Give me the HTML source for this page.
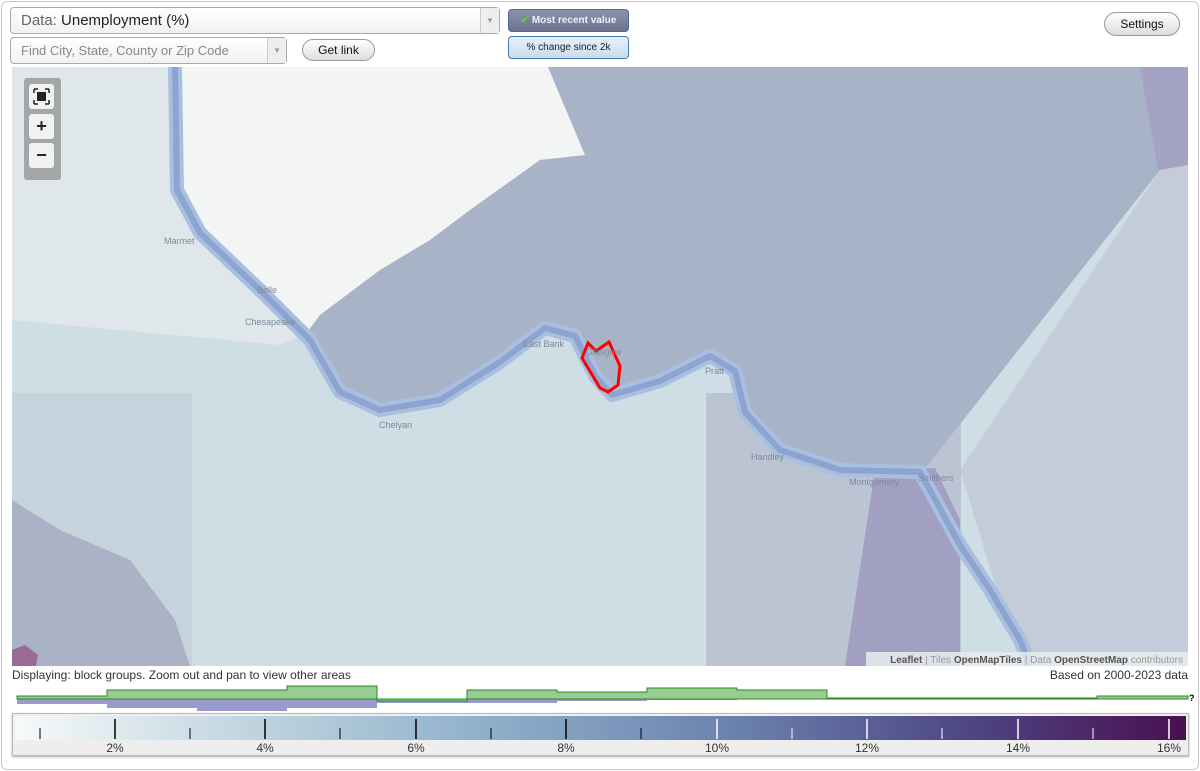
<!DOCTYPE html>
<html><head><meta charset="utf-8"><style>
*{box-sizing:border-box}
body{margin:0;width:1200px;height:771px;background:#fff;font-family:"Liberation Sans",sans-serif;overflow:hidden;position:relative}
.frame{position:absolute;left:1px;top:1px;width:1198px;height:769px;border:1px solid #c8c8c8;border-radius:6px}
.sel{position:absolute;background:linear-gradient(#fff,#f1f1f1);border:1px solid #aaa;border-radius:4px;color:#444}
.arrow{position:absolute;right:0;top:0;bottom:0;width:19px;border-left:1px solid #ccc;background:#eee;color:#999;font-size:8px;text-align:center}
.btn{position:absolute;border:1px solid #999;border-radius:12px;background:linear-gradient(#fff,#ddd);font-size:12px;text-align:center;color:#111}
.tb{position:absolute;border-radius:4px;font-size:10px;text-align:center}
.ctl{position:absolute;left:24px;top:78px;width:37px;height:102px;background:#9a9a9a;border-radius:3px;opacity:.85}
.ctl div{position:absolute;left:5px;width:25px;height:25px;background:#f4f4f4;border-radius:3px;text-align:center;font-weight:bold;font-size:18px;line-height:24px;color:#000}
.lbl{position:absolute;font-size:9px;color:#7d8a9c}
</style></head><body>
<div class="frame"></div>
<div class="sel" style="left:10px;top:7px;width:490px;height:27px;font-size:15px;line-height:25px;padding-left:10px;color:#222"><span style="color:#666">Data:</span> Unemployment (%)<div class="arrow" style="line-height:25px">▼</div></div>
<div class="sel" style="left:10px;top:37px;width:277px;height:27px;font-size:13px;line-height:25px;padding-left:10px;color:#888">Find City, State, County or Zip Code<div class="arrow" style="line-height:25px">▼</div></div>
<div class="btn" style="left:302px;top:39px;width:73px;height:22px;line-height:20px">Get link</div>
<div class="tb" style="left:508px;top:9px;width:121px;height:23px;line-height:21px;background:linear-gradient(#8a93a8,#6b7590);border:1px solid #4a6a9a;color:#eef;font-weight:bold"><span style="color:#6c3">✔</span> Most recent value</div>
<div class="tb" style="left:508px;top:36px;width:121px;height:23px;line-height:21px;background:linear-gradient(#e6f0fb,#c9dcf0);border:1px solid #4a7ab0;color:#222">% change since 2k</div>
<div class="btn" style="left:1104px;top:12px;width:76px;height:24px;line-height:22px">Settings</div>

<svg style="position:absolute;left:12px;top:67px" width="1176" height="599" viewBox="12 67 1176 599">
<rect x="12" y="67" width="1176" height="599" fill="#cfdde4"/>
<polygon points="12,67 176,67 180,190 200,235 260,290 305,335 280,345 12,320" fill="#dfe7ea"/>
<polygon points="176,67 548,67 585,155 540,160 470,210 430,240 380,270 320,315 305,335 260,290 200,235 180,190" fill="#f2f5f4"/>
<rect x="12" y="393" width="180" height="273" fill="#c6d3dc"/>
<polygon points="12,500 60,530 130,560 175,620 190,666 12,666" fill="#aab3c6"/>
<rect x="706" y="393" width="255" height="273" fill="#bac4d2"/>
<polygon points="960,470 1160,170 1188,165 1188,666 1030,666 1000,600" fill="#c3ccd8"/>
<polygon points="305,335 320,315 380,270 430,240 470,210 540,160 585,155 548,67 1188,67 1188,165 1160,170 920,475 870,470 780,450 745,410 735,370 710,355 660,380 610,395 595,375 575,335 545,328 500,360 440,400 380,410 340,390" fill="#a9b3c8"/>
<polygon points="1140,67 1188,67 1188,165 1158,170" fill="#a5a3c4"/>
<polygon points="875,470 935,468 960,520 960,666 845,666" fill="#a19fc2"/>
<polygon points="12,650 25,645 38,655 36,666 12,666" fill="#9a6c95"/>
<polyline points="175,67 177,190 200,233 260,290 310,340 340,392 380,410 440,400 500,362 545,328 575,336 595,376 612,395 660,381 710,356 735,371 745,412 780,450 840,470 920,472 960,545 990,590 1020,640 1030,666" fill="none" stroke="#a9bfdf" stroke-width="14" stroke-linejoin="round"/>
<polyline points="175,67 177,190 200,233 260,290 310,340 340,392 380,410 440,400 500,362 545,328 575,336 595,376 612,395 660,381 710,356 735,371 745,412 780,450 840,470 920,472 960,545 990,590 1020,640 1030,666" fill="none" stroke="#8ea4d0" stroke-width="6" stroke-linejoin="round"/>
<polygon points="582,358 588,343 596,351 609,342 620,366 618,385 608,392 600,388" fill="none" stroke="#f00" stroke-width="3"/>
<rect x="866" y="652" width="322" height="14" fill="#e8ecef" opacity=".85"/>
<text x="1183" y="663" font-size="10" text-anchor="end" fill="#999" font-family="Liberation Sans"><tspan fill="#555" font-weight="bold">Leaflet</tspan> | Tiles <tspan fill="#555" font-weight="bold">OpenMapTiles</tspan> | Data <tspan fill="#555" font-weight="bold">OpenStreetMap</tspan> contributors</text>
</svg>
<div class="lbl" style="left:164px;top:236px">Marmet</div>
<div class="lbl" style="left:257px;top:285px">Belle</div>
<div class="lbl" style="left:245px;top:317px">Chesapeake</div>
<div class="lbl" style="left:523px;top:339px">East Bank</div>
<div class="lbl" style="left:586px;top:347px">Glasgow</div>
<div class="lbl" style="left:705px;top:366px">Pratt</div>
<div class="lbl" style="left:379px;top:420px">Chelyan</div>
<div class="lbl" style="left:751px;top:452px">Handley</div>
<div class="lbl" style="left:849px;top:477px">Montgomery</div>
<div class="lbl" style="left:918px;top:473px">Smithers</div>
<div class="ctl"><div style="top:6px"><svg width="25" height="25"><rect x="8" y="8" width="9" height="9" fill="#000"/><path d="M5 5h4M5 5v4M20 5h-4M20 5v4M5 20h4M5 20v-4M20 20h-4M20 20v-4" stroke="#000" stroke-width="1.5"/></svg></div><div style="top:36px">+</div><div style="top:65px">−</div></div>

<div style="position:absolute;left:12px;top:668px;font-size:12px;color:#333">Displaying: block groups. Zoom out and pan to view other areas</div>
<div style="position:absolute;right:12px;top:668px;font-size:12px;color:#333">Based on 2000-2023 data</div>
<svg style="position:absolute;left:0;top:680px" width="1200" height="35">
<polygon points="17,19 17,24 107,24 107,28 197,28 197,31 287,31 287,28 377,28 377,23 467,23 467,23 557,23 557,21 647,21 647,20 737,20 737,19" fill="#9b9acc"/>
<polygon points="17,19 17,16 107,16 107,10 287,10 287,6 377,6 377,21 467,21 467,10 557,10 557,12 647,12 647,8 737,8 737,10 827,10 827,18 1097,18 1097,16 1188,16 1188,19" fill="#98cc90" stroke="#2a8a2a" stroke-width="1"/>
<text x="1189" y="21" font-size="9" font-weight="bold" fill="#000">?</text>
</svg>
<div style="position:absolute;left:12px;top:713px;width:1177px;height:43px;border:1px solid #bbb;background:#eee;box-shadow:0 1px 2px #aaa">
<div style="position:absolute;left:2px;top:2px;right:2px;height:24px;background:linear-gradient(90deg,#f6fafa,#c6d8e2 18%,#8fb0cb 40%,#6a80ac 62%,#4f4a88 80%,#4a0f50)"></div>
<svg style="position:absolute;left:-12px;top:0" width="1190" height="42">
<g stroke="#000" stroke-width="1.5"><line x1="114" y1="5" x2="114" y2="25"/><line x1="264" y1="5" x2="264" y2="25"/><line x1="415" y1="5" x2="415" y2="25"/><line x1="565" y1="5" x2="565" y2="25"/></g>
<g stroke="#fff" stroke-width="1.5"><line x1="716" y1="5" x2="716" y2="25"/><line x1="866" y1="5" x2="866" y2="25"/><line x1="1017" y1="5" x2="1017" y2="25"/><line x1="1168" y1="5" x2="1168" y2="25"/></g>
<g stroke="#000" stroke-width="1"><line x1="39" y1="14" x2="39" y2="25"/><line x1="189" y1="14" x2="189" y2="25"/><line x1="339" y1="14" x2="339" y2="25"/><line x1="490" y1="14" x2="490" y2="25"/><line x1="640" y1="14" x2="640" y2="25"/></g>
<g stroke="#fff" stroke-width="1"><line x1="791" y1="14" x2="791" y2="25"/><line x1="941" y1="14" x2="941" y2="25"/><line x1="1092" y1="14" x2="1092" y2="25"/></g>
<g font-size="12" fill="#333" text-anchor="middle" font-family="Liberation Sans"><text x="114" y="38">2%</text><text x="264" y="38">4%</text><text x="415" y="38">6%</text><text x="565" y="38">8%</text><text x="716" y="38">10%</text><text x="866" y="38">12%</text><text x="1017" y="38">14%</text><text x="1168" y="38">16%</text></g>
</svg></div>
</body></html>
